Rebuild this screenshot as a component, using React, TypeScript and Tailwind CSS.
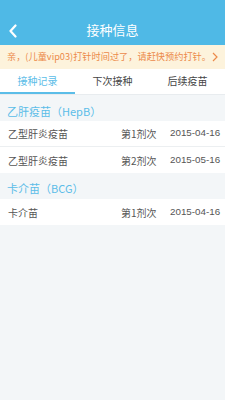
import React from 'react';

const groups = [
  {
    title: '乙肝疫苗（HepB）',
    rows: [
      { name: '乙型肝炎疫苗', dose: '第1剂次', date: '2015-04-16' },
      { name: '乙型肝炎疫苗', dose: '第2剂次', date: '2015-05-16' },
    ],
  },
  {
    title: '卡介苗（BCG）',
    rows: [{ name: '卡介苗', dose: '第1剂次', date: '2015-04-16' }],
  },
];

const App: React.FC = () => {
  return (
    <div
      className="w-[225px] h-[400px] bg-[#f3f6f8] overflow-hidden"
      style={{ fontFamily: '"Noto Sans CJK SC", "Liberation Sans", sans-serif' }}
    >
      {/* Header */}
      <div className="h-[45px] bg-[#4fb9e6] pt-[15px] flex items-center justify-center relative">
        <span className="text-white text-[13px]">接种信息</span>
        <svg className="absolute left-[8px] top-[24px]" width="10" height="14" viewBox="0 0 10 14">
          <path d="M7.5 1.5 L2.5 7 L7.5 12.5" stroke="white" strokeWidth="2.2" fill="none" strokeLinecap="round" strokeLinejoin="round" />
        </svg>
      </div>

      {/* Notice */}
      <div className="h-[24px] bg-[#fdf3dc] flex items-center pl-[7px] pr-[7px] justify-between">
        <span className="text-[#ec8a4a] text-[9.2px] whitespace-nowrap overflow-hidden">亲，(儿童vip03)打针时间过了，请赶快预约打针。</span>
        <svg className="shrink-0" width="6" height="10" viewBox="0 0 6 10">
          <path d="M1 1 L5 5 L1 9" stroke="#ec8a4a" strokeWidth="1.2" fill="none" />
        </svg>
      </div>

      {/* Tabs */}
      <div className="h-[26px] bg-white grid grid-cols-3 border-b border-[#e8ecef]">
        <div className="flex flex-col">
          <div className="flex-1 flex items-center justify-center text-[10px] text-[#5bbde8]">接种记录</div>
          <div className="h-[2px] bg-[#5bbde8]" />
        </div>
        <div className="flex items-center justify-center text-[10px] text-[#444] pb-[2px]">下次接种</div>
        <div className="flex items-center justify-center text-[10px] text-[#444] pb-[2px]">后续疫苗</div>
      </div>

      {/* Groups */}
      {groups.map((g, gi) => (
        <div key={gi}>
          <div className={`${gi === 0 ? 'pt-[6px]' : 'pt-[4px]'} h-[26px] flex items-center px-[7px] text-[11px] text-[#5bbde8]`}>
            {g.title}
          </div>
          <div className="bg-white">
            {g.rows.map((r, ri) => (
              <div
                key={ri}
                className={`h-[26px] flex items-center text-[10px] text-[#555] ${ri < g.rows.length - 1 ? 'border-b border-[#eceff1]' : ''}`}
              >
                <span className="pl-[8px] flex-1">{r.name}</span>
                <span className="w-[49px]">{r.dose}</span>
                <span className="w-[55px] text-[9.8px]" style={{ fontFamily: '"Liberation Sans", sans-serif' }}>{r.date}</span>
              </div>
            ))}
          </div>
        </div>
      ))}
    </div>
  );
};

export default App;
